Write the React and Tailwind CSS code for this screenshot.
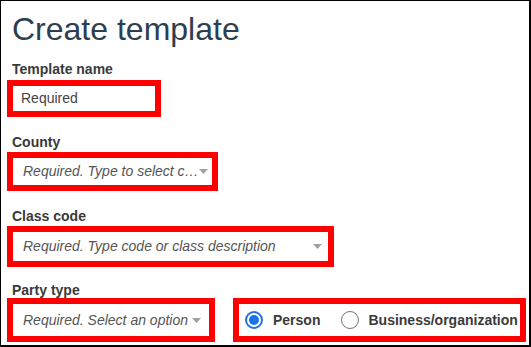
import React from "react";

const font = { fontFamily: '"Liberation Sans", Arial, sans-serif' };

function Caret() {
  return (
    <svg width="9" height="5" viewBox="0 0 9 5" className="shrink-0">
      <path d="M0 0 L9 0 L4.5 5 Z" fill="#a0a0a0" />
    </svg>
  );
}

function Label({ children }) {
  return <div className="text-[14px] font-bold leading-[16px] text-[#3a3a3a] pl-[5px]">{children}</div>;
}

function Radio({ checked }) {
  return checked ? (
    <div className="w-[18px] h-[18px] rounded-full border-[2px] border-[#1a73e8] flex items-center justify-center shrink-0">
      <div className="w-[10px] h-[10px] rounded-full bg-[#1a73e8]" />
    </div>
  ) : (
    <div className="w-[18px] h-[18px] rounded-full border border-[#767676] shrink-0" />
  );
}

export default function App() {
  return (
    <div style={font} className="w-[531px] h-[347px] bg-white border border-black border-r-2 border-b-2 pl-[6px] overflow-hidden">
      <h1 className="text-[32px] leading-[36px] text-[#2c3e50] pl-[5px] pt-[10px]">Create template</h1>
      <div className="mt-[14px]">
        <Label>Template name</Label>
        <div className="mt-[3px] w-[154px] h-[37px] border-[6px] border-[#ff0000] flex items-center pl-[8px] text-[14px] text-[#444]">
          Required
        </div>
      </div>
      <div className="mt-[17px]">
        <Label>County</Label>
        <div className="mt-[2px] w-[211px] h-[39px] border-[6px] border-[#ff0000] flex items-center pl-[10px] pr-[5px] text-[14px] italic text-[#555]">
          <span className="whitespace-nowrap">Required. Type to select c…</span>
          <Caret />
        </div>
      </div>
      <div className="mt-[17px]">
        <Label>Class code</Label>
        <div className="mt-[2px] w-[327px] h-[41px] border-[6px] border-[#ff0000] flex items-center justify-between pl-[10px] pr-[6px] text-[14px] italic text-[#555]">
          <span>Required. Type code or class description</span>
          <Caret />
        </div>
      </div>
      <div className="mt-[15px]">
        <Label>Party type</Label>
        <div className="mt-[0px] flex gap-[18px]">
          <div className="w-[208px] h-[44px] border-[6px] border-[#ff0000] flex items-center justify-between pl-[10px] pr-[8px] text-[14px] italic text-[#555]">
            <span>Required. Select an option</span>
            <Caret />
          </div>
          <div className="w-[293px] h-[44px] border-[6px] border-[#ff0000] flex items-center pl-[6px] text-[14px] font-bold text-[#3a3a3a]">
            <Radio checked />
            <span className="ml-[10px]">Person</span>
            <span className="ml-[21px]"><Radio /></span>
            <span className="ml-[9px]">Business/organization</span>
          </div>
        </div>
      </div>
    </div>
  );
}
